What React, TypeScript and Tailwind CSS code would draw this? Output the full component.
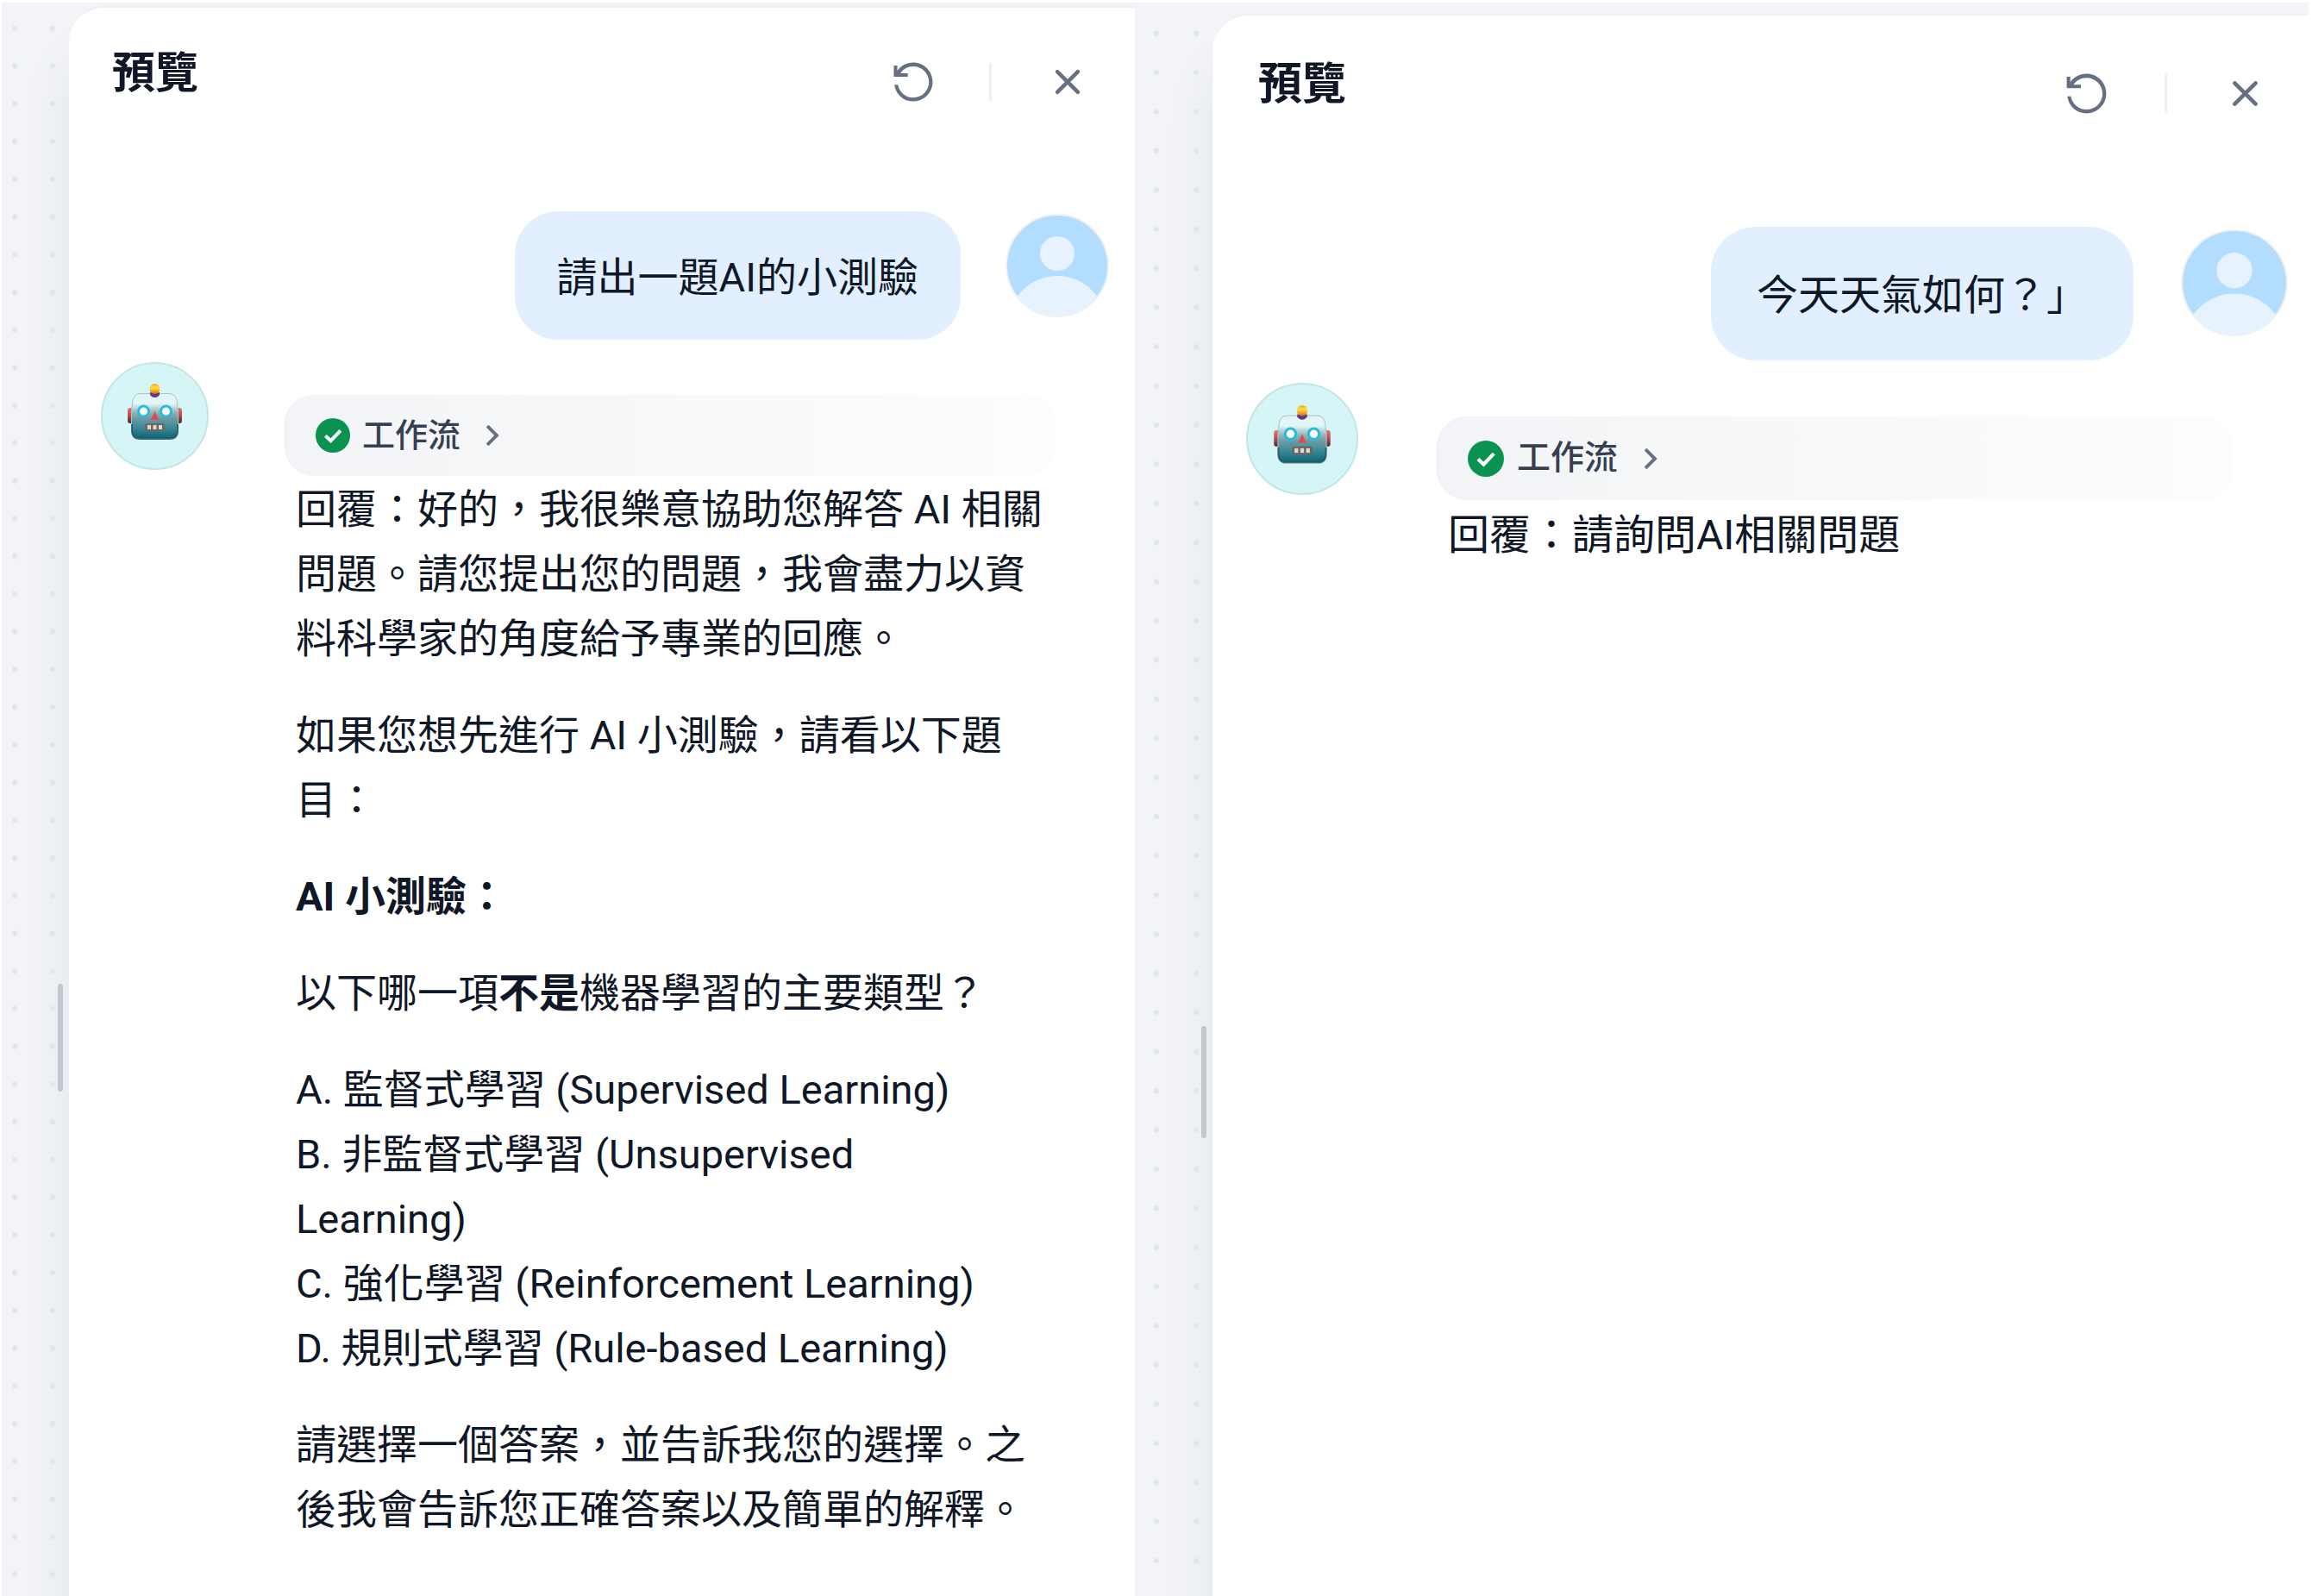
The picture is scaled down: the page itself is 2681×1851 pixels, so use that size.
import React from "react";

type Theme = {
  section: string;
  panel: string;
  gutter: string;
  dots: string;
  handle: string;
  header: string;
  title: string;
  actions: string;
  icon: string;
  divider: string;
  userRow: string;
  bubble: string;
  userAvatar: string;
  botRow: string;
  botAvatar: string;
  answer: string;
  pill: string;
  pillLabel: string;
  check: string;
  chevron: string;
  body: string;
};

const left: Theme = {
  section: "ml-[2px] pt-[4px]",
  panel: "rounded-tl-[40px]",
  gutter: "w-[78px]",
  dots: "top-[4px] bottom-[3px] bg-[size:44px_44px] bg-[position:-7px_0px]",
  handle: "h-[125px] w-[6px] right-[7px] top-[1134px]",
  header: "h-[175px] pl-[50px] pr-[51px] pt-[39px]",
  title: "text-[50px] leading-[74px]",
  actions: "h-[94px] gap-[61px]",
  icon: "size-[54px]",
  divider: "h-[44px]",
  userRow: "mt-[61px] gap-[52px] pr-[30px]",
  bubble: "rounded-[50px] px-[49px] pt-[39px] pb-[35px] text-[47px] leading-[75px]",
  userAvatar: "mt-[3px] size-[120px]",
  botRow: "mt-[26px] gap-[88px] pl-[37px] pr-[91px]",
  botAvatar: "size-[125px]",
  answer: "pt-[38px]",
  pill: "h-[94px] rounded-[34px] gap-[14px] pl-[35px]",
  pillLabel: "text-[38px]",
  check: "size-[40px]",
  chevron: "size-[46px]",
  body: "mt-[1px] gap-[37px] pl-[13px] text-[47px] leading-[75px]",
};

const right: Theme = {
  section: "mr-[4px] pt-[13px]",
  panel: "rounded-tl-[42px]",
  gutter: "w-[90px]",
  dots: "top-[0px] bottom-[18px] bg-[size:46px_45px] bg-[position:2px_0px]",
  handle: "h-[130px] w-[6px] right-[7px] top-[1174px]",
  header: "h-[179px] pl-[53px] pr-[46px] pt-[43px]",
  title: "text-[51px] leading-[74px]",
  actions: "h-[94px] gap-[63px]",
  icon: "size-[55px]",
  divider: "h-[46px]",
  userRow: "mt-[66px] gap-[55px] pr-[24px]",
  bubble: "rounded-[52px] px-[53px] pt-[41px] pb-[37px] text-[48px] leading-[77px]",
  userAvatar: "mt-[3px] size-[124px]",
  botRow: "mt-[26px] gap-[91px] pl-[39px] pr-[87px]",
  botAvatar: "size-[130px]",
  answer: "pt-[39px]",
  pill: "h-[97px] rounded-[36px] gap-[15px] pl-[35px]",
  pillLabel: "text-[39px]",
  check: "size-[42px]",
  chevron: "size-[46px]",
  body: "mt-[2px] gap-[38px] pl-[13px] text-[48px] leading-[77px]",
};

function ResetIcon({ className }: { className: string }) {
  return (
    <svg viewBox="0 0 24 24" className={className} fill="currentColor" aria-hidden="true">
      <path d="M12 4C9.25 4 6.82 5.39 5.39 7.5H9.2V9.3H2V3.5H3.8V6.2C5.6 3.66 8.6 2 12 2C17.52 2 22 6.48 22 12C22 17.52 17.52 22 12 22C6.9 22 2.9 18.3 2.3 13.4H4.1C4.8 17.2 8 20.1 12 20.1C16.5 20.1 20.1 16.5 20.1 12C20.1 7.58 16.42 4 12 4Z" />
    </svg>
  );
}

function CloseIcon({ className }: { className: string }) {
  return (
    <svg viewBox="0 0 24 24" className={className} aria-hidden="true">
      <path d="M6.7 6.7L17.3 17.3M17.3 6.7L6.7 17.3" fill="none" stroke="currentColor" strokeWidth="2" strokeLinecap="round" />
    </svg>
  );
}

function CheckIcon({ className }: { className: string }) {
  return (
    <svg viewBox="0 0 20 20" className={className} aria-hidden="true">
      <circle cx="10" cy="10" r="10" fill="#099250" />
      <path d="M5.7 10.2L8.8 13.1L14.4 7.2" fill="none" stroke="#fff" strokeWidth="2" />
    </svg>
  );
}

function ChevronIcon({ className }: { className: string }) {
  return (
    <svg viewBox="0 0 24 24" className={className} fill="currentColor" aria-hidden="true">
      <path d="M13.17 12L8.22 7.05L9.64 5.64L16 12L9.64 18.36L8.22 16.95L13.17 12Z" />
    </svg>
  );
}

function UserAvatar({ className }: { className: string }) {
  return (
    <svg viewBox="0 0 120 120" className={className} role="img" aria-label="使用者">
      <defs>
        <clipPath id="user-clip">
          <circle cx="60" cy="60" r="59" />
        </clipPath>
      </defs>
      <g clipPath="url(#user-clip)">
        <rect width="120" height="120" fill="#b2ddff" />
        <circle cx="60" cy="46" r="20" fill="#e6f3ff" />
        <circle cx="60" cy="129" r="57" fill="#e6f3ff" />
      </g>
      <circle cx="60" cy="60" r="59" fill="none" stroke="#f1f1f1" strokeWidth="2" />
    </svg>
  );
}

function BotAvatar({ className }: { className: string }) {
  return (
    <svg viewBox="0 0 125 125" className={className} role="img" aria-label="機器人">
      <defs>
        <linearGradient id="head" x1="0" y1="0" x2="0" y2="1">
          <stop offset="0" stopColor="#dff5f3" />
          <stop offset="0.22" stopColor="#e2f6f6" />
          <stop offset="0.42" stopColor="#8fb3b8" />
          <stop offset="0.55" stopColor="#6b9aa3" />
          <stop offset="0.75" stopColor="#3a8b97" />
          <stop offset="1" stopColor="#0f6072" />
        </linearGradient>
        <linearGradient id="ear" x1="0" y1="0" x2="0" y2="1">
          <stop offset="0" stopColor="#f0716f" />
          <stop offset="0.5" stopColor="#b84b50" />
          <stop offset="1" stopColor="#4a2630" />
        </linearGradient>
        <linearGradient id="bulb" x1="0" y1="0" x2="0" y2="1">
          <stop offset="0" stopColor="#f5a21c" />
          <stop offset="0.4" stopColor="#ffe04a" />
          <stop offset="0.75" stopColor="#f49a1b" />
          <stop offset="1" stopColor="#c5622c" />
        </linearGradient>
      </defs>
      <circle cx="62.5" cy="62.5" r="61.5" fill="#d5f5f6" stroke="#c4e6e7" strokeWidth="2" />
      <rect x="31" y="53" width="8" height="18" rx="3" fill="url(#ear)" />
      <rect x="86" y="53" width="8" height="18" rx="3" fill="url(#ear)" />
      <path d="M46 36.5H79Q86 36.5 88 44L89.5 56V79Q89.5 89 80 89H45Q35.5 89 35.5 79V56L37 44Q39 36.5 46 36.5Z" fill="url(#head)" stroke="#a9c6c2" strokeWidth="1" />
      <path d="M36 72V79Q36 89 45 89H80Q89 89 89 79V72" fill="none" stroke="#164a58" strokeOpacity="0.7" strokeWidth="2" />
      <path d="M57 35H68V38Q66 41 62.5 41Q59 41 57 38Z" fill="#5b3a86" />
      <circle cx="62.5" cy="31" r="6" fill="url(#bulb)" />
      <circle cx="49.5" cy="57" r="6" fill="#fff" stroke="#28bcd9" strokeWidth="3" />
      <circle cx="75.5" cy="57" r="6" fill="#fff" stroke="#28bcd9" strokeWidth="3" />
      <path d="M62.5 57L67 67H58Z" fill="#e5484b" />
      <rect x="51" y="71" width="23" height="9" rx="3" fill="#6b6660" />
      <rect x="54" y="73" width="4" height="5" fill="#dedad2" />
      <rect x="60.5" y="73" width="4" height="5" fill="#dedad2" />
      <rect x="67" y="73" width="4" height="5" fill="#dedad2" />
    </svg>
  );
}

function PreviewPanel({
  theme,
  question,
  children,
}: {
  theme: Theme;
  question: string;
  children: React.ReactNode;
}) {
  return (
    <section className={`flex overflow-hidden bg-[#f2f4f8] ${theme.section}`}>
      <div className={`relative shrink-0 ${theme.gutter}`}>
        <div
          className={`absolute inset-x-0 bg-[radial-gradient(circle,#e1e4ee_0px,#e1e4ee_2px,transparent_4px)] [background-repeat:repeat_round] ${theme.dots}`}
        />
        <div className={`absolute z-10 rounded-full bg-[#c3c6cc] ${theme.handle}`} />
      </div>
      <div
        className={`min-w-0 flex-1 border-t-2 border-[#eef0f2] bg-white shadow-[0_60px_60px_rgba(16,50,60,0.08)] ${theme.panel}`}
      >
        <header className={`flex items-start justify-between ${theme.header}`}>
          <h2 className={`font-semibold text-[#101828] ${theme.title}`}>預覽</h2>
          <div className={`flex items-center text-[#676f83] ${theme.actions}`}>
            <button type="button" aria-label="重新開始">
              <ResetIcon className={theme.icon} />
            </button>
            <div className={`w-[3px] bg-[#eeeff2] ${theme.divider}`} />
            <button type="button" aria-label="關閉">
              <CloseIcon className={theme.icon} />
            </button>
          </div>
        </header>

        <div className={`flex items-start justify-end ${theme.userRow}`}>
          <p className={`bg-[#e1efff] ${theme.bubble}`}>{question}</p>
          <UserAvatar className={`shrink-0 ${theme.userAvatar}`} />
        </div>

        <div className={`flex items-start ${theme.botRow}`}>
          <BotAvatar className={`shrink-0 ${theme.botAvatar}`} />
          <div className={`min-w-0 flex-1 ${theme.answer}`}>
            <button
              type="button"
              className={`flex w-full items-center border-l border-[#e9ebf0] bg-linear-to-r from-[#f3f4f7] to-[#fdfdfd] font-medium text-[#354052] ${theme.pill}`}
            >
              <CheckIcon className={theme.check} />
              <span className={theme.pillLabel}>工作流</span>
              <ChevronIcon className={`text-[#676f83] ${theme.chevron}`} />
            </button>
            <div className={`flex flex-col ${theme.body}`}>{children}</div>
          </div>
        </div>
      </div>
    </section>
  );
}

export default function App() {
  return (
    <main
      lang="zh-Hant"
      className="grid min-h-screen grid-cols-[1316fr_1365fr] bg-white pt-[3px] font-['Roboto','Noto_Sans_CJK_TC',sans-serif] text-[#101828]"
    >
      <PreviewPanel theme={left} question="請出一題AI的小測驗">
        <p>回覆：好的，我很樂意協助您解答 AI 相關問題。請您提出您的問題，我會盡力以資料科學家的角度給予專業的回應。</p>
        <p>如果您想先進行 AI 小測驗，請看以下題目：</p>
        <p className="font-bold">AI 小測驗：</p>
        <p>
          以下哪一項<strong>不是</strong>機器學習的主要類型？
        </p>
        <p>
          A. 監督式學習 (Supervised Learning)
          <br />
          B. 非監督式學習 (Unsupervised
          <br />
          Learning)
          <br />
          C. 強化學習 (Reinforcement Learning)
          <br />
          D. 規則式學習 (Rule-based Learning)
        </p>
        <p>請選擇一個答案，並告訴我您的選擇。之後我會告訴您正確答案以及簡單的解釋。</p>
      </PreviewPanel>
      <PreviewPanel theme={right} question="今天天氣如何？」">
        <p>回覆：請詢問AI相關問題</p>
      </PreviewPanel>
    </main>
  );
}
